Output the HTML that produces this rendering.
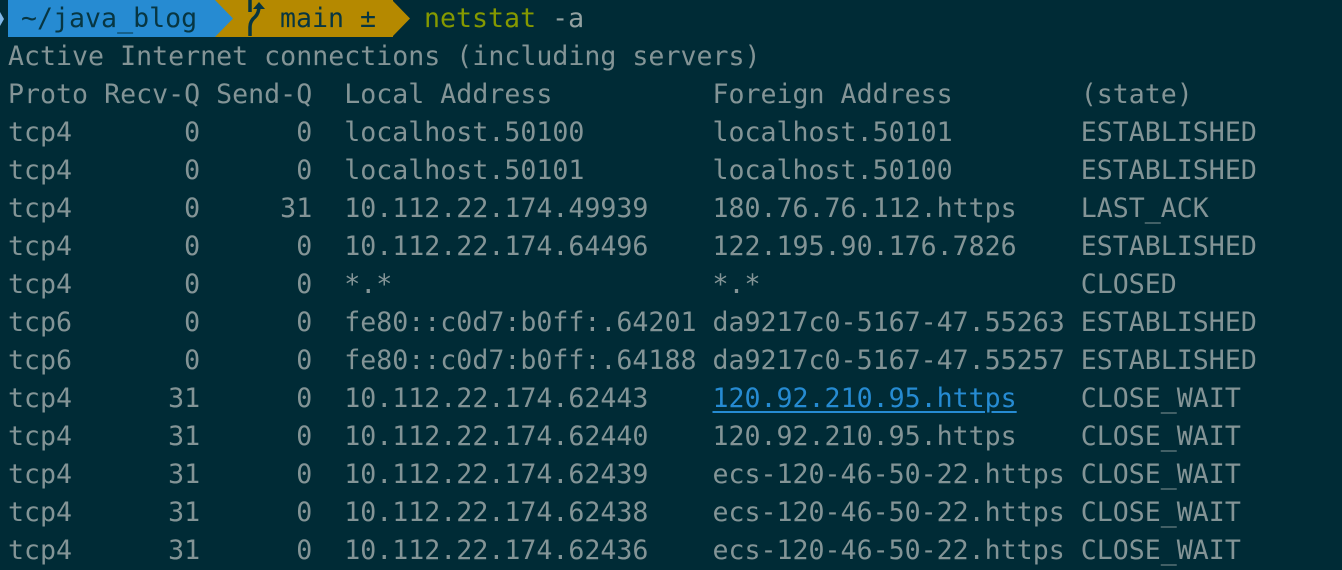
<!DOCTYPE html>
<html><head><meta charset="utf-8"><style>
html,body{margin:0;padding:0;background:#002b36;width:1342px;height:570px;overflow:hidden}
.t{position:absolute;left:8px;top:0;font-family:"DejaVu Sans Mono","Liberation Mono",monospace;font-size:26.6px;line-height:38px;color:#839496;white-space:pre}
.l{color:#268bd2;text-decoration:underline;text-decoration-thickness:2px;text-underline-offset:4px}
.p{position:absolute;font-family:"DejaVu Sans Mono","Liberation Mono",monospace;font-size:26.6px;line-height:38px;white-space:pre;top:0}
</style></head><body>
<svg width="420" height="38" style="position:absolute;left:0;top:0">
<polygon points="0,12 4,19 0,26" fill="#7fb7e8"/>
<rect x="8" y="0" width="208" height="37" fill="#268bd2"/>
<rect x="215" y="0" width="178" height="37" fill="#b58900"/>
<polygon points="215,0 233,18.5 215,37" fill="#268bd2"/>
<polygon points="392,0 410,18.5 392,37" fill="#b58900"/>
<path d="M250 0 L250 12 M250 36 L250 27 Q250 21 255 17 Q259 13 259 6" stroke="#073642" stroke-width="3.5" fill="none"/>
<polygon points="253,9 259,2 265,9" fill="#073642"/>
</svg>
<div class="p" style="left:21px;color:#073642">~/java_blog</div>
<div class="p" style="left:280px;color:#073642">main ±</div>
<div class="p" style="left:424px;color:#859900">netstat <span style="color:#93a1a1">-a</span></div>
<div class="t" style="top:38px">Active Internet connections (including servers)
Proto Recv-Q Send-Q  Local Address          Foreign Address        (state)
tcp4       0      0  localhost.50100        localhost.50101        ESTABLISHED
tcp4       0      0  localhost.50101        localhost.50100        ESTABLISHED
tcp4       0     31  10.112.22.174.49939    180.76.76.112.https    LAST_ACK
tcp4       0      0  10.112.22.174.64496    122.195.90.176.7826    ESTABLISHED
tcp4       0      0  *.*                    *.*                    CLOSED
tcp6       0      0  fe80::c0d7:b0ff:.64201 da9217c0-5167-47.55263 ESTABLISHED
tcp6       0      0  fe80::c0d7:b0ff:.64188 da9217c0-5167-47.55257 ESTABLISHED
tcp4      31      0  10.112.22.174.62443    <span class="l">120.92.210.95.https</span>    CLOSE_WAIT
tcp4      31      0  10.112.22.174.62440    120.92.210.95.https    CLOSE_WAIT
tcp4      31      0  10.112.22.174.62439    ecs-120-46-50-22.https CLOSE_WAIT
tcp4      31      0  10.112.22.174.62438    ecs-120-46-50-22.https CLOSE_WAIT
tcp4      31      0  10.112.22.174.62436    ecs-120-46-50-22.https CLOSE_WAIT</div>
</body></html>
